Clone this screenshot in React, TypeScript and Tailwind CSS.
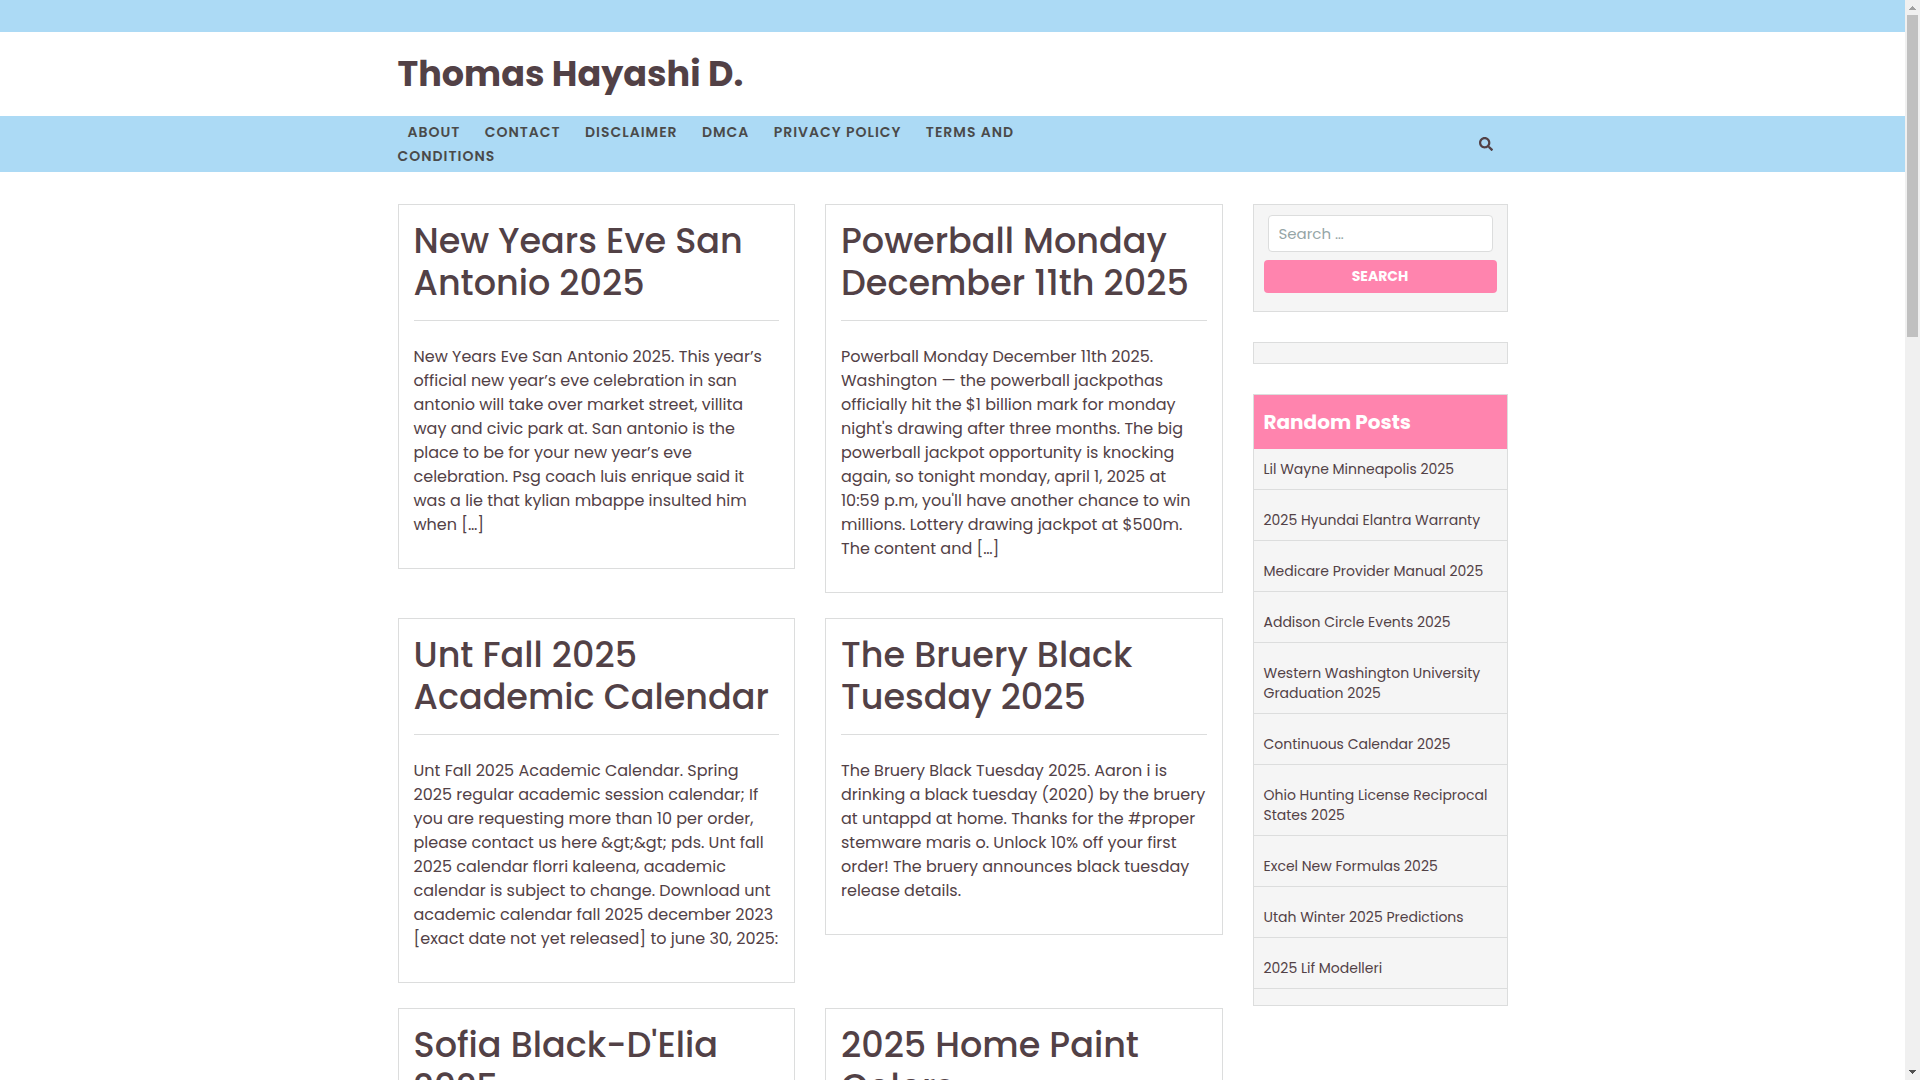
import React, { useState } from 'react';
import { FaSearch } from 'react-icons/fa';

interface Post {
  title: string;
  excerpt: string;
}

const navLinks = ['About', 'Contact', 'Disclaimer', 'DMCA', 'Privacy Policy', 'Terms and Conditions'];

const posts: Post[] = [
  {
    title: 'New Years Eve San Antonio 2025',
    excerpt:
      'New Years Eve San Antonio 2025. This year’s official new year’s eve celebration in san antonio will take over market street, villita way and civic park at. San antonio is the place to be for your new year’s eve celebration. Psg coach luis enrique said it was a lie that kylian mbappe insulted him when […]'
  },
  {
    title: 'Powerball Monday December 11th 2025',
    excerpt:
      "Powerball Monday December 11th 2025. Washington — the powerball jackpothas officially hit the $1 billion mark for monday night's drawing after three months. The big powerball jackpot opportunity is knocking again, so tonight monday, april 1, 2025 at 10:59 p.m, you'll have another chance to win millions. Lottery drawing jackpot at $500m. The content and […]"
  },
  {
    title: 'Unt Fall 2025 Academic Calendar',
    excerpt:
      'Unt Fall 2025 Academic Calendar. Spring 2025 regular academic session calendar; If you are requesting more than 10 per order, please contact us here &gt;&gt; pds. Unt fall 2025 calendar florri kaleena, academic calendar is subject to change. Download unt academic calendar fall 2025 december 2023 [exact date not yet released] to june 30, 2025:'
  },
  {
    title: 'The Bruery Black Tuesday 2025',
    excerpt:
      'The Bruery Black Tuesday 2025. Aaron i is drinking a black tuesday (2020) by the bruery at untappd at home. Thanks for the #proper stemware maris o. Unlock 10% off your first order! The bruery announces black tuesday release details.'
  },
  { title: "Sofia Black-D'Elia 2025", excerpt: '' },
  { title: '2025 Home Paint Colors', excerpt: '' }
];

const randomPosts = [
  'Lil Wayne Minneapolis 2025',
  '2025 Hyundai Elantra Warranty',
  'Medicare Provider Manual 2025',
  'Addison Circle Events 2025',
  'Western Washington University Graduation 2025',
  'Continuous Calendar 2025',
  'Ohio Hunting License Reciprocal States 2025',
  'Excel New Formulas 2025',
  'Utah Winter 2025 Predictions',
  '2025 Lif Modelleri'
];

const Header: React.FC = () => (
  <header>
    <div className="h-8 bg-[#acdaf5]" />
    <div className="mx-auto max-w-[1140px] px-[15px] py-[18px]">
      <h1 className="text-[35px] leading-[48px] font-bold">
        <a href="#">Thomas Hayashi D.</a>
      </h1>
    </div>
    <div className="bg-[#acdaf5]">
      <div className="mx-auto flex max-w-[1140px] items-center justify-between px-[15px] py-1">
        <nav className="w-2/3 pr-[30px] text-sm leading-6 font-semibold tracking-[1px] text-[#4a4a4a] uppercase">
          {navLinks.map(link => (
            <React.Fragment key={link}>
              <a href="#" className="px-[10px]">{link}</a>{' '}
            </React.Fragment>
          ))}
        </nav>
        <button type="button" aria-label="Open search" className="mr-[15px]">
          <FaSearch className="h-[14px] w-[14px]" />
        </button>
      </div>
    </div>
  </header>
);

const PostCard: React.FC<{ post: Post }> = ({ post }) => (
  <article className="border border-[#dcdddd] p-[15px]">
    <h2 className="border-b border-[#dcdddd] pb-4 text-[35px] leading-[42px] font-medium">
      <a href="#">{post.title}</a>
    </h2>
    <p className="mt-6 mb-4 text-base leading-6">{post.excerpt}</p>
  </article>
);

const Sidebar: React.FC = () => {
  const [query, setQuery] = useState('');

  return (
    <aside className="flex flex-col gap-[30px]">
      <form
        role="search"
        onSubmit={e => e.preventDefault()}
        className="border border-[#dcdddd] bg-[#f5f5f5] px-[10px] pt-[10px] pb-[18px]"
      >
        <div className="px-1">
          <input
            type="search"
            aria-label="Search for:"
            value={query}
            onChange={e => setQuery(e.target.value)}
            placeholder="Search …"
            className="block h-[37px] w-full rounded border border-[#dcdddd] bg-white px-[10px] text-[15px] placeholder:text-[#95a5a6]"
          />
        </div>
        <button
          type="submit"
          className="mt-2 block h-[33px] w-full rounded bg-[#ff84ae] pb-px text-sm font-bold text-white uppercase"
        >
          Search
        </button>
      </form>

      <div className="h-[22px] border border-[#dcdddd] bg-[#f5f5f5]" />

      <section className="border border-[#dcdddd] bg-[#f5f5f5] pb-4">
        <h3 className="bg-[#ff84ae] px-[10px] py-[15px] text-xl leading-6 font-bold text-white">Random Posts</h3>
        <ul>
          {randomPosts.map(title => (
            <li key={title} className="border-b border-[#dcdddd] px-[10px] pt-5 pb-[10px] text-sm leading-5 first:pt-[10px]">
              <a href="#">{title}</a>
            </li>
          ))}
        </ul>
      </section>
    </aside>
  );
};

const ScrollBar: React.FC = () => (
  <div className="flex w-[15px] shrink-0 flex-col items-center bg-[#f0f0f0]" aria-hidden="true">
    <svg viewBox="0 0 15 15" className="h-[15px] w-[15px] shrink-0" shapeRendering="crispEdges">
      <path d="M7 6h1v1h1v1h1v1h1v1H4V9h1V8h1V7h1z" fill="#a0a0a0" />
    </svg>
    <div className="h-[322px] w-[11px] bg-[#c0c0c0]" />
    <svg viewBox="0 0 15 15" className="mt-auto h-[15px] w-[15px] shrink-0" shapeRendering="crispEdges">
      <path d="M4 5h7v1h-1v1H9v1H8v1H7V8H6V7H5V6H4z" fill="#505050" />
    </svg>
  </div>
);

export default function App() {
  return (
    <div className="flex h-screen bg-white font-[Poppins,sans-serif] text-[#524146]">
      <div className="flex-1 overflow-y-auto [scrollbar-width:none]">
        <Header />
        <div className="mx-auto grid max-w-[1140px] grid-cols-[1fr_255px] items-start gap-[30px] px-[15px] pt-8">
          <main className="grid grid-cols-2 items-start gap-x-[30px] gap-y-[25px]">
            {posts.map(post => (
              <PostCard key={post.title} post={post} />
            ))}
          </main>
          <Sidebar />
        </div>
      </div>
      <ScrollBar />
    </div>
  );
}
